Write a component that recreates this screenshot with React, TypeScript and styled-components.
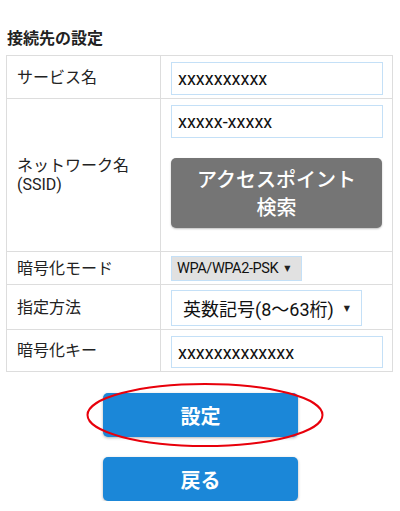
import React from "react";
import styled, { createGlobalStyle } from "styled-components";

const GlobalStyle = createGlobalStyle`
  html, body { margin: 0; padding: 0; background: #ffffff; }
  body {
    font-family: Roboto, "Noto Sans CJK JP", "Noto Sans", sans-serif;
    color: #222222;
    width: 400px;
  }
  * { box-sizing: border-box; }
`;

const Page = styled.div`
  width: 400px;
  padding: 26px 0 0 6px;
`;

const Title = styled.h2`
  margin: 0 0 0 1px;
  height: 29px;
  font-family: "Noto Sans CJK JP", sans-serif;
  font-size: 16px;
  font-weight: 700;
  line-height: 22px;
  color: #222222;
`;

const Table = styled.div`
  width: 387px;
  border: 1px solid #dddddd;
`;

const Row = styled.div<{ $first?: boolean }>`
  display: grid;
  grid-template-columns: 154px 1fr;
  border-top: ${(p) => (p.$first ? "none" : "1px solid #dddddd")};
`;

const LabelCell = styled.div`
  display: flex;
  align-items: center;
  padding-left: 10px;
  border-right: 1px solid #dddddd;
  font-family: Roboto, "Noto Sans CJK JP", sans-serif;
  font-size: 16px;
  line-height: 19px;
  color: #222222;
`;

const ValueCell = styled.div<{ $pt: number; $pb: number }>`
  display: flex;
  flex-direction: column;
  align-items: flex-start;
  padding: ${(p) => p.$pt}px 8px ${(p) => p.$pb}px 10px;
`;

const TextInput = styled.input<{ $h: number }>`
  width: 212px;
  height: ${(p) => p.$h}px;
  border: 1px solid #c4e0f7;
  border-radius: 0;
  padding: 0 6px;
  margin: 0;
  font-family: Roboto, sans-serif;
  font-size: 18px;
  color: #111111;
  background: #ffffff;
  outline: none;
`;

const SearchButton = styled.button`
  width: 211px;
  height: 70px;
  margin-top: 20px;
  border: none;
  border-radius: 5px;
  background: #757575;
  color: #ffffff;
  font-family: "Noto Sans CJK JP", sans-serif;
  font-size: 20px;
  font-weight: 500;
  line-height: 28px;
  padding: 0;
  box-shadow: 0 1px 2px rgba(0, 0, 0, 0.25);
`;

const FakeSelect = styled.div<{ $variant: "small" | "large" }>`
  display: flex;
  align-items: center;
  gap: ${(p) => (p.$variant === "small" ? "6px" : "10px")};
  height: ${(p) => (p.$variant === "small" ? "25px" : "36px")};
  width: ${(p) => (p.$variant === "small" ? "131px" : "191px")};
  padding-left: ${(p) => (p.$variant === "small" ? "5px" : "11px")};
  border: 1px solid #c4e0f7;
  background: ${(p) => (p.$variant === "small" ? "#e1e1e1" : "#ffffff")};
  color: #111111;
`;

const SelectText = styled.span<{ $variant: "small" | "large" }>`
  font-family: Roboto, "Noto Sans CJK JP", sans-serif;
  font-size: ${(p) => (p.$variant === "small" ? "14.5px" : "18px")};
  letter-spacing: ${(p) => (p.$variant === "small" ? "-0.4px" : "0")};
  white-space: nowrap;
`;

const Arrow = styled.span`
  font-family: "DejaVu Sans", sans-serif;
  font-size: 8px;
  color: #222222;
`;

const Buttons = styled.div`
  display: flex;
  flex-direction: column;
  align-items: center;
  gap: 20px;
  margin-top: 21px;
  margin-left: -6px;
  width: 400px;
  padding-left: 1px;
`;

const ButtonWrap = styled.div`
  position: relative;
  width: 195px;
  height: 44px;
`;

const BlueButton = styled.button`
  width: 195px;
  height: 44px;
  border: none;
  border-radius: 5px;
  background: #1b87d8;
  color: #ffffff;
  font-family: "Noto Sans CJK JP", sans-serif;
  font-size: 20px;
  font-weight: 700;
  padding: 0;
  box-shadow: 0 1px 3px rgba(0, 0, 0, 0.3);
`;

const Highlight = styled.svg`
  position: absolute;
  left: -18px;
  top: -11px;
  pointer-events: none;
`;

export default function App() {
  return (
    <>
      <GlobalStyle />
      <Page>
        <Title>接続先の設定</Title>
        <Table>
          <Row $first>
            <LabelCell>サービス名</LabelCell>
            <ValueCell $pt={6} $pb={3}>
              <TextInput $h={33} readOnly value="xxxxxxxxxx" />
            </ValueCell>
          </Row>
          <Row>
            <LabelCell>
              ネットワーク名
              <br />
              (SSID)
            </LabelCell>
            <ValueCell $pt={6} $pb={23}>
              <TextInput $h={33} readOnly value="xxxxx-xxxxx" />
              <SearchButton>
                アクセスポイント
                <br />
                検索
              </SearchButton>
            </ValueCell>
          </Row>
          <Row>
            <LabelCell>暗号化モード</LabelCell>
            <ValueCell $pt={4} $pb={3}>
              <FakeSelect $variant="small">
                <SelectText $variant="small">WPA/WPA2-PSK</SelectText>
                <Arrow>▼</Arrow>
              </FakeSelect>
            </ValueCell>
          </Row>
          <Row>
            <LabelCell>指定方法</LabelCell>
            <ValueCell $pt={5} $pb={3}>
              <FakeSelect $variant="large">
                <SelectText $variant="large">英数記号(8〜63桁)</SelectText>
                <Arrow>▼</Arrow>
              </FakeSelect>
            </ValueCell>
          </Row>
          <Row>
            <LabelCell>暗号化キー</LabelCell>
            <ValueCell $pt={6} $pb={3}>
              <TextInput $h={32} readOnly value="xxxxxxxxxxxxx" />
            </ValueCell>
          </Row>
        </Table>
        <Buttons>
          <ButtonWrap>
            <BlueButton>設定</BlueButton>
            <Highlight width="240" height="66" viewBox="0 0 240 66">
              <ellipse cx="120" cy="33" rx="117.5" ry="31" fill="none" stroke="#e8000b" strokeWidth="2" />
            </Highlight>
          </ButtonWrap>
          <ButtonWrap>
            <BlueButton>戻る</BlueButton>
          </ButtonWrap>
        </Buttons>
      </Page>
    </>
  );
}
